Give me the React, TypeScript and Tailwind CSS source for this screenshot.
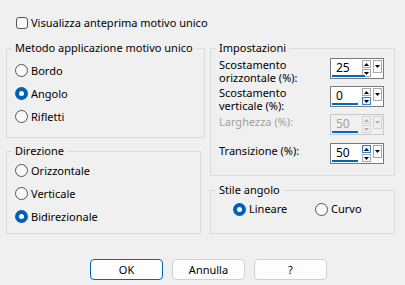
import React from "react";

function Radio({ checked, label }: { checked?: boolean; label: string }) {
  return (
    <div className="flex items-center gap-[3px] whitespace-nowrap">
      {checked ? (
        <span className="w-[13px] h-[13px] rounded-full bg-[#005fb8] flex items-center justify-center shrink-0">
          <span className="w-[5px] h-[5px] rounded-full bg-white" />
        </span>
      ) : (
        <span className="w-[13px] h-[13px] rounded-full border border-[#555] bg-[#f9f9f9] shrink-0" />
      )}
      <span>{label}</span>
    </div>
  );
}

function Tri({ up, color = "#000" }: { up?: boolean; color?: string }) {
  return (
    <svg width="5" height="3" viewBox="0 0 5 3">
      <path d={up ? "M0 3 L2.5 0 L5 3 Z" : "M0 0 L5 0 L2.5 3 Z"} fill={color} />
    </svg>
  );
}

function Spinner({
  value,
  bar,
  disabled,
  hot,
}: {
  value: string;
  bar: number;
  disabled?: boolean;
  hot?: "up" | "down";
}) {
  const arrow = disabled ? "#b0b0b0" : "#000";
  const edge = disabled ? "border-[#d4d4d4]" : "border-[#a8a8a8]";
  return (
    <div
      className={`relative w-[54px] h-[21px] border flex shrink-0 ${
        disabled ? "border-[#c8c8c8] bg-[#f0f0f0]" : "border-[#7a7a7a] bg-white"
      }`}
    >
      <div
        className={`flex-1 pl-[5px] text-[12px] leading-[18px] ${
          disabled ? "text-[#a0a0a0]" : "text-black"
        }`}
      >
        {value}
      </div>
      <div className="flex flex-col gap-[1px] pt-[1px] w-[9px] mr-[2px]">
        <div
          className={`h-[8px] border flex items-center justify-center ${
            hot === "up" ? "border-[#3d7fc9] bg-[#e5f1fb]" : edge
          }`}
        >
          <Tri up color={arrow} />
        </div>
        <div
          className={`h-[8px] border flex items-center justify-center ${
            hot === "down" ? "border-[#3d7fc9] bg-[#e5f1fb]" : edge
          }`}
        >
          <Tri color={arrow} />
        </div>
      </div>
      <div className="pt-[1px] mr-[1px]">
        <div className={`w-[9px] h-[13px] border flex items-center justify-center ${edge}`}>
          <Tri color={arrow} />
        </div>
      </div>
      <div
        className="absolute left-[1px] bottom-[1px] h-[2px] bg-[#0067c0]"
        style={{ width: bar }}
      />
    </div>
  );
}

export default function App() {
  return (
    <div
      className="w-[405px] h-[285px] bg-[#f0f0f0] text-[11px] text-black overflow-hidden"
      style={{ fontFamily: '"Noto Sans", "Liberation Sans", sans-serif' }}
    >
      <div className="pt-[15px] pl-[16px] h-[31px] flex items-start">
        <div className="flex items-center gap-[3px] h-[16px] whitespace-nowrap">
          <span className="w-[12px] h-[12px] rounded-[3px] border border-[#555] bg-[#f9f9f9]" />
          <span>Visualizza anteprima motivo unico</span>
        </div>
      </div>

      <div className="flex gap-[9px] pl-[6px] mt-[9px] leading-[16px]">
        {/* left column */}
        <div className="w-[195px] flex flex-col gap-[5px]">
          <fieldset className="border border-[#dcdcdc] pl-[5px] pr-2 h-[98px]">
            <legend className="px-[3px] whitespace-nowrap">Metodo applicazione motivo unico</legend>
            <div className="pt-[3px] pl-[3px]">
              <div className="h-[23px] flex items-center">
                <Radio label="Bordo" />
              </div>
              <div className="h-[23px] flex items-center">
                <Radio checked label="Angolo" />
              </div>
              <div className="h-[23px] flex items-center">
                <Radio label="Rifletti" />
              </div>
            </div>
          </fieldset>
          <fieldset className="border border-[#dcdcdc] pl-[5px] pr-2 h-[91px]">
            <legend className="px-[3px]">Direzione</legend>
            <div className="pl-[3px]">
              <div className="h-[23px] flex items-center">
                <Radio label="Orizzontale" />
              </div>
              <div className="h-[23px] flex items-center">
                <Radio label="Verticale" />
              </div>
              <div className="h-[23px] flex items-center">
                <Radio checked label="Bidirezionale" />
              </div>
            </div>
          </fieldset>
        </div>

        {/* right column */}
        <div className="w-[185px] flex flex-col gap-[6px]">
          <fieldset className="border border-[#dcdcdc] pl-[5px] pr-[10px] h-[136px]">
            <legend className="px-[3px]">Impostazioni</legend>
            <div className="pt-[2px] pl-[3px] leading-[13px]">
              <div className="h-[28px] flex justify-between items-start">
                <div>
                  Scostamento
                  <br />
                  orizzontale (%):
                </div>
                <Spinner value="25" bar={33} />
              </div>
              <div className="h-[28px] flex justify-between items-start">
                <div>
                  Scostamento
                  <br />
                  verticale (%):
                </div>
                <Spinner value="0" bar={26} hot="down" />
              </div>
              <div className="h-[29px] flex justify-between items-start">
                <div className="pt-[1px] text-[#a0a0a0]">Larghezza (%):</div>
                <Spinner value="50" bar={26} disabled />
              </div>
              <div className="h-[28px] flex justify-between items-start">
                <div className="pt-[1px]">Transizione (%):</div>
                <Spinner value="50" bar={26} hot="up" />
              </div>
            </div>
          </fieldset>
          <fieldset className="border border-[#dcdcdc] pl-[5px] pr-2 h-[52px]">
            <legend className="px-[3px]">Stile angolo</legend>
            <div className="flex items-center h-[22px] pl-[17px]">
              <div className="w-[82px]">
                <Radio checked label="Lineare" />
              </div>
              <Radio label="Curvo" />
            </div>
          </fieldset>
        </div>
      </div>

      <div className="flex gap-[9px] pl-[90px] mt-[25px]">
        <button className="w-[73px] h-[21px] rounded-[4px] border border-[#0067c0] bg-[#fdfdfd] leading-[19px]">
          OK
        </button>
        <button className="w-[73px] h-[21px] rounded-[4px] border border-[#d0d0d0] bg-[#fdfdfd] leading-[19px]">
          Annulla
        </button>
        <button className="w-[73px] h-[21px] rounded-[4px] border border-[#d0d0d0] bg-[#fdfdfd] leading-[19px]">
          ?
        </button>
      </div>
    </div>
  );
}
